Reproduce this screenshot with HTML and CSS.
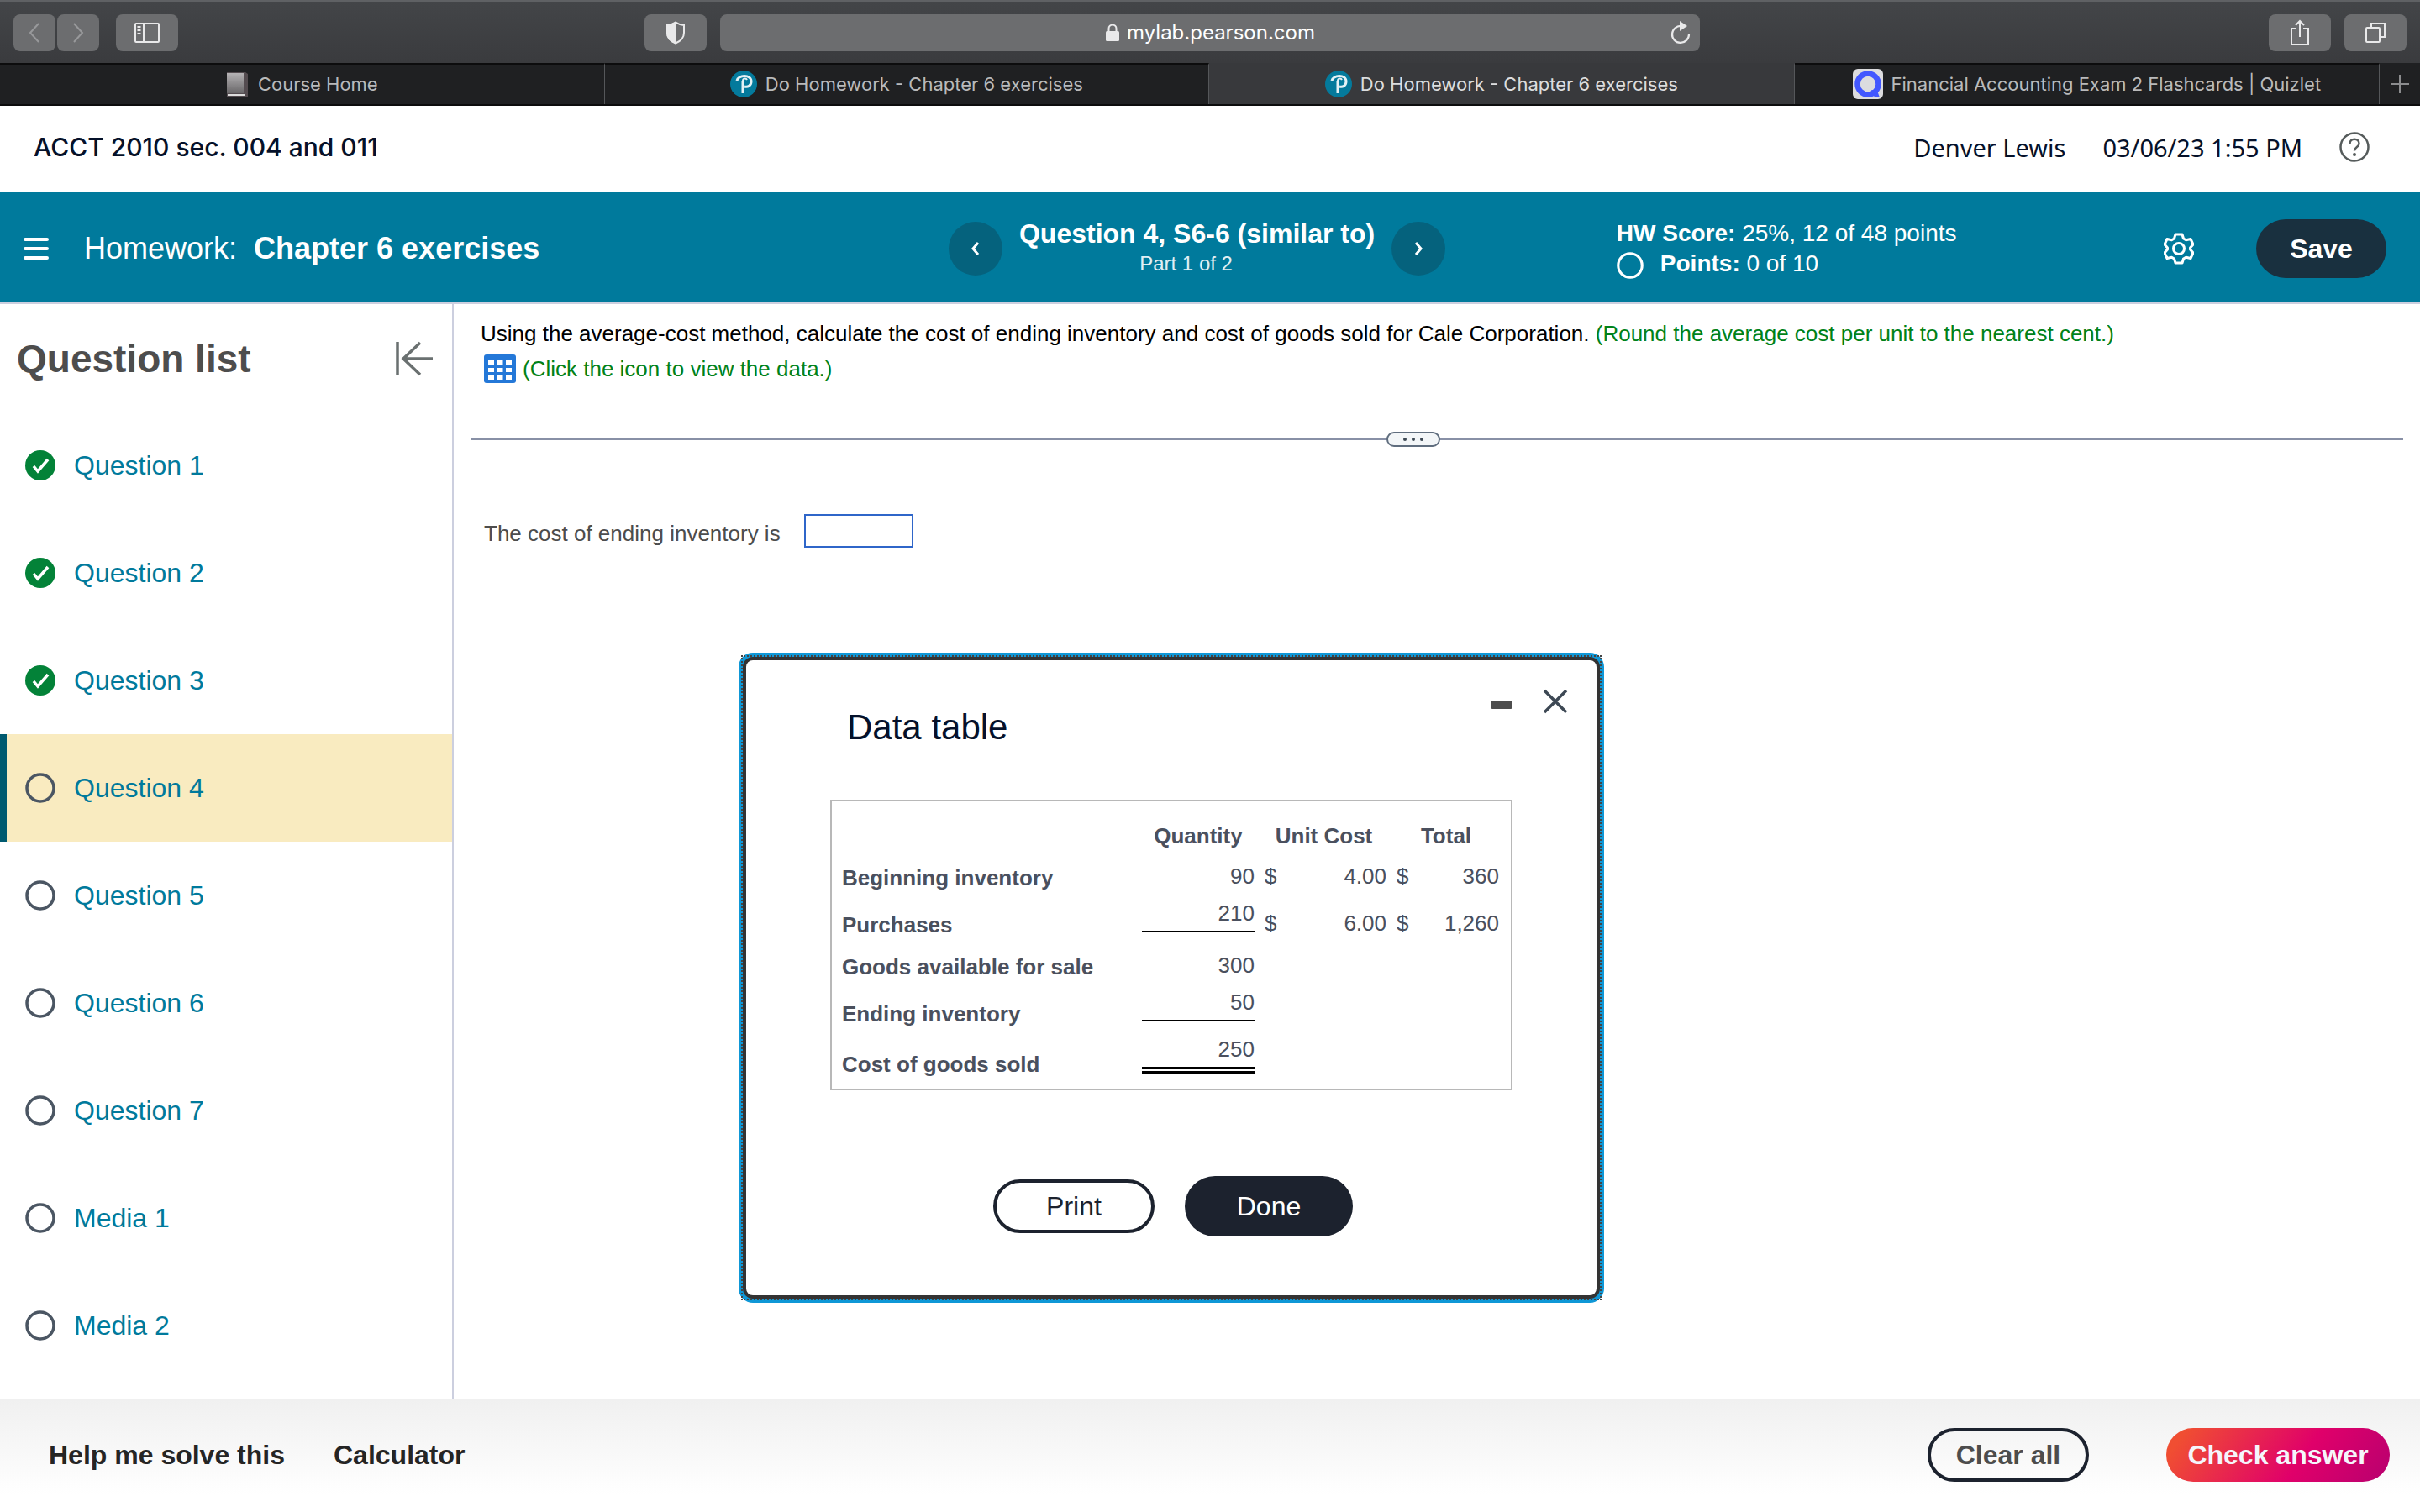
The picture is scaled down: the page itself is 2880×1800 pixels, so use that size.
FILE: index.html
```html
<!DOCTYPE html>
<html lang="en">
<head>
  <meta charset="UTF-8" />
  <meta name="viewport" content="width=device-width, initial-scale=1.0"/>
  <title>Do Homework - Chapter 6 exercises</title>
  <link rel="stylesheet" href="styles.css">
</head>
<body>
  <!-- shared icons -->
  <svg width="0" height="0" class="sprite">
    <symbol id="pearson" viewBox="0 0 32 32">
      <circle cx="16" cy="16" r="16" fill="#047a9c"/>
      <path d="M8 12c1-7 17-8 17 1 0 5-4 7-8 6M15 12v15" fill="none" stroke="#e4f1f5" stroke-width="3"/>
      <path d="M15 12c0-3 4-3 5-1" fill="none" stroke="#e4f1f5" stroke-width="2"/>
    </symbol>
    <symbol id="done" viewBox="0 0 36 36">
      <circle cx="18" cy="18" r="18" fill="#038238"/>
      <path d="M10 19l5 6L27 11" fill="none" stroke="#fff" stroke-width="3.5"/>
    </symbol>
    <symbol id="open" viewBox="0 0 36 36">
      <circle cx="18" cy="18" r="16" fill="none" stroke="currentColor" stroke-width="3.5"/>
    </symbol>
  </svg>

  <div class="toolbar">
    <div class="toolbar-left">
      <div class="history">
        <button class="tool narrow dim" aria-label="Back"><svg width="14" height="24" viewBox="0 0 14 24"><path d="M12 1L2 12l10 11"/></svg></button>
        <button class="tool narrow dim" aria-label="Forward"><svg width="14" height="24" viewBox="0 0 14 24"><path d="M2 1l10 11L2 23"/></svg></button>
      </div>
      <button class="tool" aria-label="Show sidebar"><svg width="32" height="26" viewBox="0 0 32 26"><rect x="2" y="2" width="28" height="22" rx="1"/><path d="M12 2v22M4.500 6h4M4.500 10h4M4.500 14h4"/></svg></button>
      <button class="tool shield" aria-label="Privacy report"><svg width="24" height="28" viewBox="0 0 24 28"><path d="M12 1.500c3 2.200 6 3 10 3.500v9c0 6-4 10-10 12.500C6 24 2 20 2 14V5c4-.5 7-1.300 10-3.500z"/><path d="M12 2v24C6 24 2 20 2 14V5c4-.5 7-1.300 10-3z" fill="#e9e9ea"/></svg></button>
    </div>
    <div class="address">
      <svg width="18" height="22" viewBox="0 0 18 22"><path d="M4.500 10V6a4.500 4.500 0 0 1 9 0v4" fill="none" stroke="#e9e9ea" stroke-width="2"/><rect x="1" y="9" width="16" height="12" rx="1.500" fill="#e9e9ea"/></svg>
      <input type="text" value="mylab.pearson.com" aria-label="Address">
      <button class="reload" aria-label="Reload"><svg width="26" height="28" viewBox="0 0 26 28"><path d="M14 6a10 10 0 1 0 9 10" fill="none" stroke="#e9e9ea" stroke-width="2.200"/><path d="M12 0l9 6-9 6z" fill="#e9e9ea"/></svg></button>
    </div>
    <div class="toolbar-right">
      <button class="tool" aria-label="Share"><svg width="26" height="32" viewBox="0 0 26 32"><path d="M9 11H3v19h20V11h-6M13 21V2M8 7l5-5 5 5"/></svg></button>
      <button class="tool" aria-label="Show tabs"><svg width="26" height="26" viewBox="0 0 26 26"><rect x="2" y="7" width="16" height="17" rx="1"/><path d="M8 7V2h16v16h-6"/></svg></button>
    </div>
  </div>

  <nav class="tabs">
    <a href="#" class="tab wide">
      <svg width="28" height="32" viewBox="0 0 28 32"><defs><linearGradient id="book" x2="0" y2="1"><stop offset="0" stop-color="#b5b3b5"/><stop offset="1" stop-color="#686668"/></linearGradient></defs><path d="M1 2h22l3 2v28H1z" fill="#544c50"/><path d="M1 3h20v24H1z" fill="url(#book)"/><path d="M2 28h20v2H2z" fill="#ddd"/></svg>
      Course Home
    </a>
    <a href="#" class="tab wide"><svg width="32" height="32"><use href="#pearson"/></svg>Do Homework - Chapter 6 exercises</a>
    <a href="#" class="tab active"><svg width="32" height="32"><use href="#pearson"/></svg>Do Homework - Chapter 6 exercises</a>
    <a href="#" class="tab">
      <svg width="36" height="36" viewBox="0 0 36 36"><rect width="36" height="36" rx="6" fill="#dcdcdf"/><circle cx="18" cy="18" r="12.500" fill="none" stroke="#4257ff" stroke-width="6.500"/><path d="M22 25l4 9h6l-3-8z" fill="#4257ff"/></svg>
      Financial Accounting Exam 2 Flashcards | Quizlet
    </a>
    <button class="new-tab" aria-label="New tab"><svg width="22" height="22" viewBox="0 0 22 22"><path d="M11 0v22M0 11h22" stroke="#8b8c8e" stroke-width="2"/></svg></button>
  </nav>

  <header class="course-bar">
    <div class="course">ACCT 2010 sec. 004 and 011</div>
    <div class="user">
      <span>Denver Lewis</span>
      <span>03/06/23 1:55 PM</span>
      <button aria-label="Help"><svg width="36" height="36" viewBox="0 0 36 36"><circle cx="18" cy="18" r="16.500" fill="none" stroke="#565c5c" stroke-width="2.500"/><path d="M12.500 14c0-7 11-7 11 0 0 4-5.500 4-5.500 8.500" fill="none" stroke="#565c5c" stroke-width="2.500"/><circle cx="18" cy="27" r="2" fill="#565c5c"/></svg></button>
    </div>
  </header>

  <div class="homework-bar">
    <div class="homework">
      <button class="menu" aria-label="Menu"><svg width="30" height="28" viewBox="0 0 30 28"><path d="M2 3h26M2 14h26M2 25h26" stroke="#fff" stroke-width="4" stroke-linecap="round"/></svg></button>
      <span>Homework:</span>
      <strong>Chapter 6 exercises</strong>
    </div>
    <div class="question-nav">
      <button class="round" aria-label="Previous question"><svg width="10" height="16" viewBox="0 0 10 16"><path d="M8 1L2 8l6 7"/></svg></button>
      <div class="question-title">
        <strong>Question 4, S6-6 (similar to)</strong>
        <span>Part 1 of 2</span>
      </div>
      <button class="round" aria-label="Next question"><svg width="10" height="16" viewBox="0 0 10 16"><path d="M2 1l6 7-6 7"/></svg></button>
    </div>
    <div class="score">
      <div><strong>HW Score:</strong> 25%, 12 of 48 points</div>
      <div class="points"><svg width="32" height="32"><use href="#open"/></svg><span><strong>Points:</strong> 0 of 10</span></div>
    </div>
    <div class="actions">
      <button aria-label="Settings"><svg width="36" height="38" viewBox="0 0 36 38"><path d="M14 2h8l1.500 5 3 1.800L32 7.500l3 6.500-3.500 4v2l3.500 4L32 30.500l-5.500-1.300-3 1.800L22 36h-8l-1.500-5-3-1.800L4 30.500 1 24l3.500-4v-2L1 14l3-6.500 5.500 1.300 3-1.800z"/><circle cx="18" cy="19" r="6.500"/></svg></button>
      <button class="save">Save</button>
    </div>
  </div>

  <main>
    <aside>
      <div class="list-header">
        <h2>Question list</h2>
        <button aria-label="Collapse list"><svg width="46" height="42" viewBox="0 0 46 42"><path d="M3 1v40M45 21H11M30 2L10 21l20 19" fill="none" stroke="#6a7070" stroke-width="3.500"/></svg></button>
      </div>
      <a href="#" class="question"><svg width="36" height="36"><use href="#done"/></svg>Question 1</a>
      <a href="#" class="question"><svg width="36" height="36"><use href="#done"/></svg>Question 2</a>
      <a href="#" class="question"><svg width="36" height="36"><use href="#done"/></svg>Question 3</a>
      <a href="#" class="question current"><svg width="36" height="36"><use href="#open"/></svg>Question 4</a>
      <a href="#" class="question"><svg width="36" height="36"><use href="#open"/></svg>Question 5</a>
      <a href="#" class="question"><svg width="36" height="36"><use href="#open"/></svg>Question 6</a>
      <a href="#" class="question"><svg width="36" height="36"><use href="#open"/></svg>Question 7</a>
      <a href="#" class="question"><svg width="36" height="36"><use href="#open"/></svg>Media 1</a>
      <a href="#" class="question"><svg width="36" height="36"><use href="#open"/></svg>Media 2</a>
    </aside>

    <section class="exercise">
      <div class="prompt">
        <p>Using the average-cost method, calculate the cost of ending inventory and cost of goods sold for Cale Corporation. <span class="hint">(Round the average cost per unit to the nearest cent.)</span></p>
        <p class="data-link">
          <svg width="38" height="34" viewBox="0 0 38 34"><rect width="38" height="34" rx="3" fill="#2478d8"/><path d="M5 7h7v5H5zM15.500 7h7v5h-7zM26 7h7v5h-7zM5 16h7v5H5zM15.500 16h7v5h-7zM26 16h7v5h-7zM5 25h7v5H5zM15.500 25h7v5h-7zM26 25h7v5h-7z" fill="#fff"/></svg>
          <a href="#" class="hint">(Click the icon to view the data.)</a>
        </p>
      </div>
      <div class="divider">
        <button aria-label="Resize"><i></i><i></i><i></i></button>
      </div>
      <div class="answer">
        <label for="ending">The cost of ending inventory is</label>
        <input type="text" id="ending">
      </div>

      <div class="dialog" role="dialog" aria-labelledby="dialogTitle">
        <div class="dialog-header">
          <h3 id="dialogTitle">Data table</h3>
          <div class="dialog-tools">
            <button aria-label="Minimize"><svg width="26" height="18"><rect y="8" width="26" height="10" rx="2" fill="#4d4d4d"/></svg></button>
            <button aria-label="Close"><svg width="30" height="30" viewBox="0 0 30 30"><path d="M2 2l26 26M28 2L2 28" stroke="#3d4854" stroke-width="3.500"/></svg></button>
          </div>
        </div>
        <div class="table-box">
          <table>
            <colgroup><col class="c-label"><col class="c-qty"><col class="c-sign"><col class="c-unit"><col class="c-sign"><col class="c-total"></colgroup>
            <tr><th></th><th>Quantity</th><th colspan="2" class="money">Unit Cost</th><th colspan="2" class="money">Total</th></tr>
            <tr><th scope="row">Beginning inventory</th><td>90</td><td class="sign">$</td><td>4.00</td><td class="sign">$</td><td>360</td></tr>
            <tr class="tall"><th scope="row">Purchases</th><td><span class="line">210</span></td><td class="sign">$</td><td>6.00</td><td class="sign">$</td><td>1,260</td></tr>
            <tr><th scope="row">Goods available for sale</th><td>300</td><td colspan="4"></td></tr>
            <tr class="tall"><th scope="row">Ending inventory</th><td><span class="line">50</span></td><td colspan="4"></td></tr>
            <tr class="final"><th scope="row">Cost of goods sold</th><td><span class="line double">250</span></td><td colspan="4"></td></tr>
          </table>
        </div>
        <div class="dialog-buttons">
          <button class="outline">Print</button>
          <button class="solid">Done</button>
        </div>
      </div>
    </section>
  </main>

  <footer>
    <a href="#">Help me solve this</a>
    <a href="#">Calculator</a>
    <button class="outline clear">Clear all</button>
    <button class="check">Check answer</button>
  </footer>
</body>
</html>
```

FILE: styles.css
```css
* {
  box-sizing: border-box;
}
body {
  margin: 0;
  min-height: 100vh;
  display: flex;
  flex-direction: column;
  font-family: "Liberation Sans", Arial, sans-serif;
  background: #fff;
}
button {
  padding: 0;
  border: none;
  background: none;
  font-family: inherit;
  cursor: pointer;
}
a {
  text-decoration: none;
}
svg {
  display: block;
  flex-shrink: 0;
}
.sprite {
  position: absolute;
}

/* browser toolbar */
.toolbar {
  height: 75px;
  display: grid;
  grid-template-columns: 1fr 40.5% 1fr;
  align-items: center;
  background: linear-gradient(#434548, #3a3b3e);
  border-top: 2px solid #5f6164;
}
.toolbar-left,
.toolbar-right {
  display: flex;
  padding: 0 16px;
}
.toolbar-left {
  gap: 20px;
}
.toolbar-right {
  gap: 16px;
  justify-content: flex-end;
}
.history {
  display: flex;
  gap: 2px;
}
.tool {
  width: 74px;
  height: 44px;
  display: flex;
  align-items: center;
  justify-content: center;
  border-radius: 8px;
  background: #6c6d6f;
}
.tool svg {
  fill: none;
  stroke: #e9e9ea;
  stroke-width: 2;
}
.tool.narrow {
  width: 50px;
}
.tool.dim svg {
  stroke: #98999b;
}
.tool.shield {
  margin-left: auto;
}
.address {
  position: relative;
  height: 44px;
  display: flex;
  align-items: center;
  justify-content: center;
  gap: 8px;
  border-radius: 8px;
  background: #6c6d6f;
}
.address input {
  field-sizing: content;
  padding: 0;
  border: none;
  background: none;
  color: #fff;
  font: 24px Inter, sans-serif;
}
.reload {
  position: absolute;
  right: 10px;
}

/* tab strip */
.tabs {
  height: 51px;
  display: flex;
  background: #1f2022;
  border-bottom: 2px solid #0c0c0d;
}
.tab {
  flex: 30 1 0;
  display: flex;
  align-items: center;
  justify-content: center;
  gap: 10px;
  padding-bottom: 2px;
  border-top: 2px solid #0c0c0d;
  border-right: 1px solid #55575a;
  color: #b9babb;
  font: 22px Inter, sans-serif;
  white-space: nowrap;
}
.tab.wide {
  flex-grow: 31;
}
.tab.active {
  background: #38393c;
  border-top-color: #38393c;
  color: #dcddde;
}
.new-tab {
  width: 48px;
  display: flex;
  align-items: center;
  justify-content: center;
}

/* course header */
.course-bar {
  height: 102px;
  padding: 0 60px 4px 40px;
  display: flex;
  justify-content: space-between;
  align-items: center;
  color: #05112a;
}
.course {
  font: 500 30px Inter, sans-serif;
}
.user {
  display: flex;
  align-items: center;
  gap: 44px;
  font: 29px "Noto Sans", sans-serif;
}

/* homework bar */
.homework-bar {
  height: 134px;
  padding-top: 4px;
  display: grid;
  grid-template-columns: 39.2% 27.6% 22.6% 1fr;
  align-items: center;
  background: #007a9c;
  border-bottom: 2px solid #cccfdf;
  color: #fff;
}
.homework {
  display: flex;
  align-items: center;
  padding-left: 28px;
  font-size: 36px;
}
.homework span {
  margin: 0 20px 0 42px;
}
.question-nav {
  display: flex;
  align-items: center;
  gap: 20px;
}
.round {
  width: 64px;
  height: 64px;
  display: flex;
  align-items: center;
  justify-content: center;
  border-radius: 50%;
  background: #05627d;
}
.round svg {
  fill: none;
  stroke: #fff;
  stroke-width: 3;
}
.question-title {
  display: flex;
  flex-direction: column;
  text-align: center;
  font-size: 32px;
  line-height: 36px;
}
.question-title span {
  padding-right: 26px;
  font-size: 24px;
  color: #e0eff4;
}
.score {
  font-size: 28px;
  line-height: 36px;
}
.points {
  display: flex;
  align-items: flex-end;
  gap: 20px;
}
.actions {
  display: flex;
  align-items: center;
  justify-content: space-between;
  padding-right: 40px;
}
.actions svg {
  fill: none;
  stroke: #fff;
  stroke-width: 3;
  stroke-linejoin: round;
}
.save {
  width: 155px;
  height: 70px;
  border-radius: 35px;
  background: #19303f;
  color: #fff;
  font-size: 32px;
  font-weight: bold;
}

main {
  flex: 1;
  display: flex;
}

/* question list */
aside {
  width: 540px;
  flex-shrink: 0;
  border-right: 2px solid #cccfdf;
}
.list-header {
  height: 128px;
  padding: 2px 22px 0 20px;
  display: flex;
  align-items: center;
  justify-content: space-between;
}
.list-header h2 {
  margin: 0;
  font-size: 46px;
  color: #4d4d4d;
}
.question {
  height: 128px;
  padding-left: 22px;
  display: flex;
  align-items: center;
  gap: 22px;
  border-left: 8px solid transparent;
  color: #007a9c;
  font-size: 32px;
}
.question svg {
  color: #4b5663;
}
.question.current {
  background: #f9ebc0;
  border-left-color: #005a70;
}

/* exercise */
.exercise {
  position: relative;
  flex: 1;
  padding: 14px 20px;
  font-size: 26px;
}
.prompt {
  height: 146px;
  padding-left: 12px;
  line-height: 42px;
  color: #000;
}
.prompt p {
  margin: 0;
}
.hint {
  color: #008218;
}
.data-link {
  display: flex;
  align-items: center;
  gap: 8px;
  padding-left: 4px;
}
.divider {
  position: relative;
  height: 2px;
  background: #8890a6;
}
.divider button {
  position: absolute;
  left: 47.4%;
  top: -8px;
  width: 64px;
  height: 18px;
  display: flex;
  align-items: center;
  justify-content: center;
  gap: 6px;
  border: 2px solid #5f6d7e;
  border-radius: 9px;
  background: #f3f6f8;
}
.divider i {
  width: 4px;
  height: 4px;
  border-radius: 50%;
  background: #3d4854;
}
.answer {
  display: flex;
  align-items: center;
  gap: 28px;
  margin-top: 88px;
  padding-left: 16px;
  color: #4d4d4d;
}
.answer label {
  padding-top: 6px;
}
.answer input {
  width: 130px;
  height: 40px;
  border: 2px solid #2f66c9;
  font-size: 26px;
}

/* data table dialog */
.dialog {
  position: absolute;
  left: 344px;
  top: 420px;
  width: 1020px;
  padding: 34px 100px 70px;
  border: 4px solid #333;
  border-radius: 12px;
  background: #fff;
  box-shadow: 0 0 0 5px #0f97d6;
}
.dialog::after {
  content: "";
  position: absolute;
  inset: -6px;
  border: 2px dotted #444;
  pointer-events: none;
}
.dialog-header {
  height: 132px;
  display: flex;
  justify-content: space-between;
}
.dialog-header h3 {
  margin: 22px 0 0 20px;
  font-size: 42px;
  font-weight: normal;
  color: #05112a;
}
.dialog-tools {
  display: flex;
  align-items: center;
  gap: 36px;
  height: 30px;
  margin-right: -66px;
}
.table-box {
  padding: 0 14px 10px 12px;
  border: 2px solid #b8b8b8;
}
table {
  width: 100%;
  table-layout: fixed;
  border-collapse: collapse;
  color: #4a505e;
  line-height: 30px;
}
.c-label {
  width: 357px;
}
.c-qty {
  width: 134px;
}
.c-sign {
  width: 30px;
}
.c-unit {
  width: 127px;
}
tr {
  height: 50px;
}
tr:first-child {
  height: 60px;
}
tr.tall {
  height: 56px;
}
tr.final {
  height: 60px;
}
th,
td {
  padding: 0 0 4px;
  vertical-align: bottom;
}
th[scope="row"] {
  text-align: left;
}
td {
  padding-bottom: 6px;
  text-align: right;
}
.money {
  padding-left: 8px;
}
.sign {
  padding-left: 12px;
  text-align: left;
}
.line {
  display: block;
  margin-bottom: 4px;
  padding-bottom: 6px;
  border-bottom: 2px solid #000;
}
.line.double {
  margin-bottom: 2px;
  border-bottom: 8px double #000;
}
.dialog-buttons {
  display: flex;
  align-items: center;
  justify-content: center;
  gap: 36px;
  margin-top: 102px;
  padding-left: 4px;
}
.outline,
.solid,
.check {
  height: 64px;
  border-radius: 32px;
  font-size: 32px;
}
.outline {
  width: 192px;
  border: 4px solid #1c222e;
  color: #1c222e;
}
.solid {
  width: 200px;
  height: 72px;
  border-radius: 36px;
  background: #1c222e;
  color: #fff;
}

footer {
  height: 134px;
  padding: 0 36px 2px 58px;
  display: flex;
  align-items: center;
  background: linear-gradient(#f0f0f0, #fff 85%);
}
footer a {
  margin-right: 58px;
  color: #252525;
  font-size: 32px;
  font-weight: bold;
}
.clear {
  margin-left: auto;
  color: #4d4d4d;
  font-weight: bold;
}
.check {
  width: 266px;
  margin-left: 92px;
  background: linear-gradient(125deg, #f04e32 8%, #e0006a 60%, #b8006f);
  color: #f5f5fb;
  font-weight: bold;
}
```
